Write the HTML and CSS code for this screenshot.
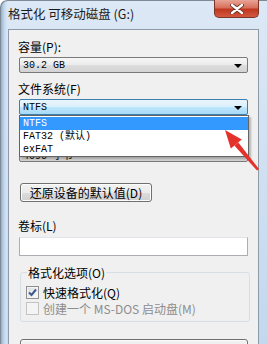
FILE: index.html
```html
<!DOCTYPE html>
<html lang="zh-CN">
<head>
  <meta charset="UTF-8">
  <meta name="viewport" content="width=device-width, initial-scale=1.0">
  <title>格式化 可移动磁盘 (G:)</title>
  <link rel="stylesheet" href="styles.css">
</head>
<body>
  <div class="window">
    <div class="titlebar">
      <span class="title">格式化 可移动磁盘 (G:)</span>
      <span class="close">
        <svg width="14" height="10" viewBox="0 0 14 10">
          <path d="M2 1 L12 9 M12 1 L2 9" stroke="#5a2a22" stroke-width="4" stroke-linecap="round"/>
          <path d="M2 1 L12 9 M12 1 L2 9" stroke="#fff" stroke-width="2.4" stroke-linecap="round"/>
        </svg>
      </span>
    </div>
    <div class="client">
      <div class="label">容量(P):</div>
      <div class="select"><span class="value">30.2 GB</span><span class="caret"></span></div>

      <div class="label">文件系统(F)</div>
      <div class="combo">
        <div class="select focus"><span class="value">NTFS</span><span class="caret"></span></div>
        <ul class="list">
          <li class="selected">NTFS</li>
          <li>FAT32 (默认)</li>
          <li>exFAT</li>
        </ul>
      </div>

      <!-- allocation unit row sits under the open list -->
      <div class="label alloc"></div>
      <div class="select under"><span class="value">4096 字节</span><span class="caret"></span></div>

      <div class="btn restore">还原设备的默认值(D)</div>

      <div class="label volume">卷标(L)</div>
      <div class="input"></div>

      <fieldset class="group">
        <legend>格式化选项(O)</legend>
        <div class="check">
          <span class="box">
            <svg width="9" height="9" viewBox="0 0 9 9">
              <path d="M1 4.5 L3.5 7 L8 1.5" fill="none" stroke="#3d5a8f" stroke-width="2"/>
            </svg>
          </span>
          <span>快速格式化(Q)</span>
        </div>
        <div class="check disabled">
          <span class="box"></span>
          <span>创建一个 MS-DOS 启动盘(M)</span>
        </div>
      </fieldset>

      <div class="btn wide"></div>
    </div>

    <svg class="arrow" width="267" height="344" viewBox="0 0 267 344">
      <polygon points="225,130 241.8,139.6 230.8,148.4" fill="#e5312b"/>
      <polygon points="234.3,145.5 238.3,142.5 259,169 257,170.5" fill="#e5312b"/>
    </svg>
  </div>
</body>
</html>
```

FILE: styles.css
```css
body {
  margin: 0;
  width: 267px;
  height: 344px;
  overflow: hidden;
  background: #fff;
  font-family: "Noto Sans CJK SC", "Liberation Sans", sans-serif;
  font-size: 12px;
  color: #000;
}
.window {
  position: relative;
  width: 267px;
  height: 344px;
  border-top-left-radius: 7px;
  background:
    linear-gradient(to right, #7d9cc0 0, #b5cbe3 3px, #d2e2f2 6px, transparent 8px),
    linear-gradient(to bottom, #dce8f5, #c3d8ee);
  box-shadow: inset 1px 1px 0 #7f8a96;
  overflow: hidden;
}
.titlebar {
  height: 29px;
  display: flex;
  align-items: center;
  justify-content: space-between;
  padding-left: 8px;
}
.title {
  font-size: 12.5px;
  color: #1b1b1b;
  margin-top: -2px;
}
.close {
  align-self: flex-start;
  width: 45px;
  height: 18px;
  margin-right: 8px;
  box-sizing: border-box;
  border: 1px solid #7a3528;
  border-top: 0;
  border-radius: 0 0 5px 5px;
  background: linear-gradient(to bottom, #e7a596 0, #d8705c 45%, #c0371f 55%, #d2583f 100%);
  display: flex;
  align-items: center;
  justify-content: center;
}
.client {
  margin: 0 8px 0 8px;
  height: 315px;
  box-sizing: border-box;
  border: 1px solid #8e9aa8;
  border-bottom: 0;
  background: #f0f0f0;
  padding: 9px 10px 0 9px;
}
.label {
  line-height: 15px;
  height: 15px;
}
.select {
  position: relative;
  height: 16px;
  margin: 3px 0 0 1px;
  box-sizing: border-box;
  border: 1px solid #7a7a7a;
  border-radius: 2px;
  background: linear-gradient(to bottom, #f6f6f6 0, #ebebeb 50%, #dddddd 51%, #d3d3d3 100%);
  display: flex;
  align-items: center;
  padding-left: 3px;
}
.select + .label {
  margin-top: 8px;
}
.select.focus {
  border-color: #3c7fb1;
  background: linear-gradient(to bottom, #eaf6fd 0, #d9f0fc 50%, #bee6fd 51%, #a7d9f5 100%);
}
.select.under {
  overflow: hidden;
}
.value, .list li {
  font-family: "Liberation Mono", "Noto Sans CJK SC", monospace;
  font-size: 10px;
}
.caret {
  position: absolute;
  right: 5px;
  top: 6px;
  border-left: 4px solid transparent;
  border-right: 4px solid transparent;
  border-top: 4px solid #000;
}
.combo {
  position: relative;
}
.list {
  position: absolute;
  left: 1px;
  right: -1px;
  top: 16px;
  margin: 0;
  padding: 1px 0 0;
  list-style: none;
  background: #fff;
  border: 1px solid #646464;
  box-shadow: 2px 2px 2px rgba(0, 0, 0, 0.25);
  z-index: 2;
}
.list li {
  height: 13px;
  line-height: 13px;
  padding-left: 3px;
}
.list li.selected {
  background: #3399ff;
  color: #fff;
}
.label.alloc {
  margin-top: 13px;
}
.btn {
  height: 19px;
  box-sizing: border-box;
  border: 1px solid #707070;
  border-radius: 3px;
  background: linear-gradient(to bottom, #f2f2f2 0, #ebebeb 50%, #dddddd 51%, #cfcfcf 100%);
  box-shadow: inset 0 0 0 1px #fcfcfc;
  display: flex;
  align-items: center;
  justify-content: center;
  line-height: 15px;
}
.btn.restore {
  width: 132px;
  margin: 21px 0 0 2px;
}
.label.volume {
  margin-top: 16px;
}
.input {
  height: 19px;
  margin: 4px 0 0 1px;
  box-sizing: border-box;
  border: 1px solid #abadb3;
  border-top-color: #e2e3ea;
  background: #fff;
}
.group {
  margin: 9px -2px 0 2px;
  padding: 4px 5px 5px;
  border: 1px solid #d5dfe5;
  border-radius: 3px;
}
.group legend {
  padding: 0 1px;
  margin-left: 1px;
  line-height: 15px;
}
.check {
  display: flex;
  align-items: center;
  gap: 4px;
  height: 16px;
  line-height: 15px;
}
.check .box {
  width: 11px;
  height: 11px;
  border: 1px solid #8f8f8f;
  background: linear-gradient(135deg, #dcdcdc, #fbfbfb);
  box-shadow: inset 0 0 0 1px #f4f4f4;
  display: flex;
  align-items: center;
  justify-content: center;
}
.check.disabled {
  color: #8d8d8d;
}
.check.disabled .box {
  border-color: #c4c4c4;
  background: #f4f4f4;
}
.btn.wide {
  height: 23px;
  margin: 17px 0 0 2px;
}
.arrow {
  position: absolute;
  left: 0;
  top: 0;
  pointer-events: none;
  z-index: 3;
}
```
